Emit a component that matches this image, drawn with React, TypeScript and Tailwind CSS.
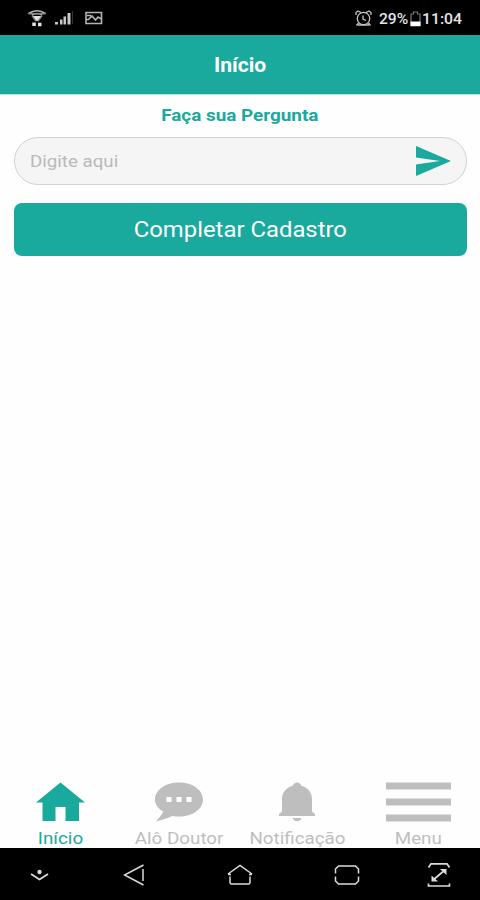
import type { ReactNode } from 'react';
import { clsx } from 'clsx';

interface TabProps {
  label: string;
  active?: boolean;
  children: ReactNode;
}

function Tab({ label, active, children }: TabProps) {
  return (
    <button
      className={clsx(
        'flex flex-col items-center pt-[12px]',
        active ? 'text-[#19a99d]' : 'text-[#bebebe]'
      )}
    >
      <span className="flex h-[40px] items-start justify-center">{children}</span>
      <span className="mt-[6px] block scale-x-[1.105] whitespace-nowrap text-[17px] leading-[20px]">
        {label}
      </span>
    </button>
  );
}

function StatusBar() {
  return (
    <div className="flex h-[35px] shrink-0 items-center justify-between bg-black pl-[28px] pr-[18px] text-[#e4e4e4]">
      <div className="flex items-center pt-[1px]">
        <svg width="18" height="18" viewBox="0 0 18 18" fill="none" stroke="currentColor" strokeWidth="1.600">
          <path d="M.5 4.500Q9-1 17.500 4.500M4 6Q9 3 14 6" stroke="#b4b4b4" />
          <path d="M.5 4.800h17M4 6.500L8 12M14 6.500L10 12" stroke="#888" />
          <path d="M5 7h8l-4 5.500z" fill="currentColor" stroke="none" />
          <path d="M4.300 13.500h3.500v3.500H4.300zM10 13.800h3.500v3.500H10z" fill="currentColor" stroke="none" />
        </svg>
        <svg className="ml-[9px]" width="18" height="16" viewBox="0 0 18 16" fill="#c8c8c8">
          <path d="M0 12h3v2.500H0zM5 9.500h2.500v5H5zM8.500 6.500H11v8H8.500zM12.500 3h3v11.500h-3z" />
          <path d="M17 1h1v13h-1z" fill="#333" />
        </svg>
        <svg className="ml-[12px]" width="18" height="14" viewBox="0 0 18 14" fill="none" stroke="#b5b5b5" strokeWidth="1.600">
          <path d="M1 1.500h15.500v11H1zM1.500 8.500h2l3.500-3.500 3.500 4 2.500-3 3.500 2M2 4.500h4" />
        </svg>
      </div>
      <div className="flex items-center pt-[2px]">
        <svg className="mr-[7px]" width="17" height="17" viewBox="0 0 17 17" fill="none" stroke="#c4c4c4" strokeWidth="1.300">
          <circle cx="8.500" cy="8.500" r="6.200" />
          <path d="M1 5V2.500L3 1l3 1.500M16 5V2.500L14 1l-3 1.500M8 5.500V9l3 1.500M3.500 13l-2 2.500M13.500 13l2 2.500M3 15h11" />
        </svg>
        <span className="block w-[31px] origin-left scale-x-[1.040] text-[15px] font-medium leading-[18px]">29%</span>
        <svg width="11" height="16" viewBox="0 0 11 16" fill="none" stroke="#777" strokeWidth="1.200">
          <path d="M1 3h2.500V1h4v2H10v12H1z" />
          <path d="M.5 10.500h10v4.500H.5z" fill="#fff" stroke="none" />
        </svg>
        <span className="ml-[1px] block w-[40px] origin-left scale-x-[1.050] text-[15px] font-medium leading-[18px]">11:04</span>
      </div>
    </div>
  );
}

function SystemNav() {
  return (
    <div className="grid h-[52px] shrink-0 grid-cols-[78px_112px_100px_114px_70px] place-items-center bg-black pt-[2px] text-[#dcdcdc]">
      <svg width="19" height="12" viewBox="0 0 19 12" fill="none" stroke="currentColor" strokeWidth="1.800">
        <path d="M1 5l8.500 5.500L18 5" />
        <circle cx="9.500" cy="3" r="2.200" fill="currentColor" stroke="none" />
      </svg>
      <svg width="22" height="22" viewBox="0 0 22 22" fill="none" stroke="currentColor" strokeWidth="1.500">
        <path d="M20.500 1L1.500 11l19 10M20 5v12" />
      </svg>
      <svg width="26" height="22" viewBox="0 0 26 22" fill="none" stroke="currentColor" strokeWidth="1.500">
        <path d="M1 10L13 1.500 25 10M3 12.500v6q0 1.500 1.500 1.500h17q1.500 0 1.500-1.500v-6M1 10.500h3M22 10.500h3" />
      </svg>
      <svg width="26" height="20" viewBox="0 0 26 20" fill="none" stroke="currentColor" strokeWidth="1.500">
        <path d="M1.500 8.500V4l3-3h17l3 3v4.500M1.500 11.500V16l3 3h17l3-3v-4.500" />
      </svg>
      <svg width="24" height="26" viewBox="0 0 24 26" fill="none" stroke="currentColor" strokeWidth="1.700">
        <path d="M1.500 5.500L4 1.800h16l2.500 3.700M1.500 21.500v2.500h21v-2.500M6 18L18 8" />
        <path d="M13 7h6.500v6zM4.500 13.500v6H11z" fill="currentColor" stroke="none" />
      </svg>
    </div>
  );
}

export default function App() {
  return (
    <div className="flex h-[900px] w-[480px] flex-col overflow-hidden bg-[#fefefe] font-['Roboto',sans-serif]">
      <StatusBar />

      <header className="flex h-[60px] shrink-0 items-center justify-center border-b border-[#b9e0e2] bg-[#19a99d] pt-[2px]">
        <h1 className="scale-x-[1.080] text-[19.500px] font-bold leading-[24px] text-white">Início</h1>
      </header>

      <main className="flex flex-1 flex-col px-[14px] pt-[9px]">
        <h2 className="self-center scale-x-[1.110] text-[17px] font-bold leading-[22px] text-[#19a99d]">
          Faça sua Pergunta
        </h2>
        <div className="mt-[11px] flex h-[48px] w-[453px] items-center justify-between rounded-full border border-[#d2d2d2] bg-[#f5f5f5] pl-[15px] pr-[15px]">
          <span className="block origin-left scale-x-[1.100] text-[17px] leading-[22px] text-[#b9b9b9]">Digite aqui</span>
          <svg width="35" height="32" viewBox="0 0 35 32" fill="#19a99d">
            <path d="M0 1l35 15L0 31V19.500L24 16 0 12.500z" />
          </svg>
        </div>
        <button className="mt-[18px] flex h-[53px] w-[453px] items-center justify-center rounded-[8px] bg-[#19a99d] text-white">
          <span className="block scale-x-[1.085] text-[22px] leading-[28px]">Completar Cadastro</span>
        </button>
      </main>

      <nav className="grid h-[78px] shrink-0 grid-cols-[120px_118px_118px_124px]">
        <Tab label="Início" active>
          <svg width="49" height="40" viewBox="0 0 49 40" fill="currentColor">
            <path d="M24.500.5L49 20.500h-6V39H29.500V25h-10v14H6.500V20.500H0z" />
          </svg>
        </Tab>
        <Tab label="Alô Doutor">
          <svg width="48" height="40" viewBox="0 0 48 40" fill="currentColor">
            <path d="M24 .5C37.500.5 48 8 48 17.500S37.500 34.500 24 34.500c-2.500 0-4.500-.2-6.500-.6C13 36 7 38 1 39.200c3-3 5.500-6.500 7.500-9.500C3 26.500 0 22.500 0 17.500 0 8 10.500.5 24 .5z" />
            <path d="M11.500 15h5v5h-5zM21.500 15h5v5h-5zM31.500 15h5v5h-5z" fill="#fff" />
          </svg>
        </Tab>
        <Tab label="Notificação">
          <svg width="36" height="40" viewBox="0 0 36 40" fill="currentColor">
            <path d="M18 .5c2.200 0 3.700 1.500 4.200 3.200C29 5.500 33 10.500 33 17v12.500l3 2.500v2H0v-2l3-2.500V17C3 10.500 7 5.500 13.800 3.700 14.300 2 15.800.5 18 .5zM13.500 36h9c-1 2.200-2.500 3.200-4.500 3.200s-3.500-1-4.500-3.200z" />
          </svg>
        </Tab>
        <Tab label="Menu">
          <svg width="65" height="40" viewBox="0 0 65 40" fill="currentColor">
            <path d="M0 .5h65v7H0zM0 16.500h65v7H0zM0 32.500h65v7H0z" />
          </svg>
        </Tab>
      </nav>

      <SystemNav />
    </div>
  );
}
